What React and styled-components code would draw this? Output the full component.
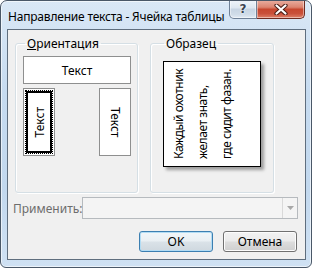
import React from 'react';
import styled, { createGlobalStyle } from 'styled-components';

const Global = createGlobalStyle`
  html, body { margin: 0; padding: 0; background: #ffffff; }
  body { font-family: "Noto Sans", "Open Sans", sans-serif; font-size: 12px; color: #000; }
  * { box-sizing: border-box; }
`;

const Window = styled.div`
  width: 312px;
  height: 268px;
  border: 1px solid #4a5868;
  border-radius: 7px 7px 6px 6px;
  background: linear-gradient(180deg, #dae8f6 0%, #c6dbf0 35%, #c2d8ee 70%, #cfe1f3 100%);
  box-shadow: inset 0 0 0 1px rgba(255, 255, 255, 0.6);
  display: flex;
  flex-direction: column;
  padding: 0 5px 7px 6px;
  overflow: hidden;
`;

const TitleBar = styled.div`
  height: 28px;
  display: flex;
  align-items: flex-start;
  flex-shrink: 0;
`;

const Title = styled.div`
  margin: 8px 0 0 1px;
  font-size: 12px;
  line-height: 15px;
  color: #000;
  white-space: nowrap;
  flex: 1;
  letter-spacing: -0.2px;
`;

const CaptionButton = styled.div`
  margin-top: -1px;
  height: 19px;
  width: ${p => p.$w}px;
  display: flex;
  align-items: center;
  justify-content: center;
  border: 1px solid ${p => (p.$close ? '#6e2b21' : '#6f8197')};
  border-top: none;
  border-radius: ${p => (p.$close ? '0 0 5px 0' : '0 0 0 5px')};
  border-left-width: ${p => (p.$close ? '0' : '1px')};
  background: ${p =>
    p.$close
      ? 'linear-gradient(180deg, #eab0a2 0%, #dc8470 40%, #c7472f 52%, #c9503a 75%, #dd8068 100%)'
      : 'linear-gradient(180deg, #f0f5fa 0%, #dfe8f1 42%, #c8d5e3 52%, #d0dce8 80%, #e2ebf4 100%)'};
  box-shadow: inset 0 0 0 1px rgba(255, 255, 255, 0.45);
`;

const CaptionGroup = styled.div`
  display: flex;
  margin-right: 1px;
`;

const HelpGlyph = styled.span`
  font-family: "DejaVu Sans", sans-serif;
  font-weight: bold;
  font-size: 12px;
  line-height: 12px;
  color: #3a4350;
  text-shadow: 0 0 2px #ffffff, 0 0 1px #ffffff;
`;

const Client = styled.div`
  flex: 1;
  border: 1px solid #5f6e7e;
  background: #f0f0f0;
  display: flex;
  flex-direction: column;
`;

const GroupsRow = styled.div`
  display: flex;
  gap: 12px;
  padding: 6px 0 0 7px;
`;

const Group = styled.fieldset`
  margin: 0;
  width: ${p => p.$w}px;
  height: 157px;
  border: 1px solid #d5dfe5;
  border-radius: 3px;
  box-shadow: inset 1px 1px 0 #ffffff, 1px 1px 0 #ffffff;
  padding: ${p => p.$pad};
  min-width: 0;
`;

const Legend = styled.legend`
  padding: 0 2px;
  margin-left: 2px;
  font-size: 12px;
  line-height: 15px;
  color: #000;
`;

const Accel = styled.span`
  text-decoration: underline;
  text-underline-offset: 1px;
`;

const OrientColumn = styled.div`
  display: flex;
  flex-direction: column;
  gap: 4px;
  margin-top: 5px;
`;

const OrientRow = styled.div`
  display: flex;
  justify-content: space-between;
`;

const OptionBox = styled.div`
  width: ${p => p.$w}px;
  height: ${p => p.$h}px;
  border: 1px solid #8e8f8f;
  background: #ffffff;
  display: flex;
  align-items: center;
  justify-content: center;
  padding: ${p => (p.$selected ? '1px' : '0')};
`;

const FocusRing = styled.div`
  width: 100%;
  height: 100%;
  border: 1px dotted #000;
`;

const SelectedFrame = styled.div`
  width: 100%;
  height: 100%;
  border: 2px solid #000;
  background: #fff;
  display: flex;
  align-items: center;
  justify-content: center;
`;

const Label = styled.span`
  font-size: 12px;
  line-height: 15px;
  white-space: nowrap;
  writing-mode: ${p => (p.$dir ? 'vertical-rl' : 'horizontal-tb')};
  transform: ${p => (p.$dir === 'up' ? 'rotate(180deg)' : 'none')};
`;

const Paper = styled.div`
  width: 98px;
  height: 106px;
  margin: 10px auto 0;
  border: 1px solid #000;
  background: #ffffff;
  box-shadow: 3px 3px 3px rgba(0, 0, 0, 0.35);
  overflow: hidden;
`;

const SampleText = styled.div`
  width: 100%;
  height: 100%;
  writing-mode: vertical-rl;
  transform: rotate(180deg);
  padding: 7px 3px 0 0;
  color: #000;
`;

const SampleLine = styled.div`
  font-size: 12px;
  line-height: 24px;
  letter-spacing: -0.45px;
  white-space: nowrap;
`;

const ApplyRow = styled.div`
  display: flex;
  align-items: center;
  margin-top: 4px;
  padding: 0 7px 0 5px;
`;

const ApplyLabel = styled.span`
  width: 69px;
  color: #6d6d6d;
  font-size: 12px;
  line-height: 15px;
`;

const Combo = styled.div`
  flex: 1;
  height: 22px;
  border: 1px solid #b6babe;
  background: #f4f4f4;
  display: flex;
  justify-content: flex-end;
`;

const ComboArrow = styled.div`
  width: 15px;
  border-left: 1px solid #d9d9d9;
  display: flex;
  align-items: center;
  justify-content: center;
`;

const ButtonRow = styled.div`
  display: flex;
  justify-content: flex-end;
  gap: 10px;
  margin-top: 12px;
  padding-right: 8px;
`;

const Button = styled.div`
  width: 74px;
  height: 21px;
  border-radius: 3px;
  border: 1px solid ${p => (p.$default ? '#3c7fb1' : '#707070')};
  background: ${p =>
    p.$default
      ? 'linear-gradient(180deg, #f1f6f9 0%, #e9eff3 48%, #dae2e8 52%, #cfd8df 100%)'
      : 'linear-gradient(180deg, #f2f2f2 0%, #ebebeb 48%, #dddddd 52%, #cfcfcf 100%)'};
  box-shadow: inset 0 0 0 1px ${p => (p.$default ? '#b2dcf4' : '#fcfcfc')};
  display: flex;
  align-items: center;
  justify-content: center;
  font-size: 12px;
  line-height: 15px;
  color: #000;
`;

export default function App() {
  return (
    <>
      <Global />
      <Window>
        <TitleBar>
          <Title>Направление текста - Ячейка таблицы</Title>
          <CaptionGroup>
            <CaptionButton $w={28}>
              <HelpGlyph>?</HelpGlyph>
            </CaptionButton>
            <CaptionButton $w={48} $close>
              <svg width="14" height="11" viewBox="0 0 14 11">
                <path d="M2.5 1.5 L11.5 9.5 M11.5 1.5 L2.5 9.5" stroke="#4a1d15" strokeWidth="4.2" strokeLinecap="round" />
                <path d="M2.5 1.5 L11.5 9.5 M11.5 1.5 L2.5 9.5" stroke="#ffffff" strokeWidth="2.2" strokeLinecap="round" />
              </svg>
            </CaptionButton>
          </CaptionGroup>
        </TitleBar>
        <Client>
          <GroupsRow>
            <Group $w={123} $pad="0 6px 0 7px">
              <Legend>
                <Accel>О</Accel>риентация
              </Legend>
              <OrientColumn>
                <OptionBox $w={108} $h={28}>
                  <Label>Текст</Label>
                </OptionBox>
                <OrientRow>
                  <OptionBox $w={32} $h={68} $selected>
                    <FocusRing>
                      <SelectedFrame>
                        <Label $dir="up">Текст</Label>
                      </SelectedFrame>
                    </FocusRing>
                  </OptionBox>
                  <OptionBox $w={32} $h={68}>
                    <Label $dir="down">Текст</Label>
                  </OptionBox>
                </OrientRow>
              </OrientColumn>
            </Group>
            <Group $w={124} $pad="0 11px 0 11px">
              <Legend>Образец</Legend>
              <Paper>
                <SampleText>
                  <SampleLine>Каждый охотник</SampleLine>
                  <SampleLine>желает знать,</SampleLine>
                  <SampleLine>где сидит фазан.</SampleLine>
                </SampleText>
              </Paper>
            </Group>
          </GroupsRow>
          <ApplyRow>
            <ApplyLabel>Применить:</ApplyLabel>
            <Combo>
              <ComboArrow>
                <svg width="7" height="4" viewBox="0 0 7 4">
                  <path d="M0 0 L7 0 L3.5 4 Z" fill="#a8a8a8" />
                </svg>
              </ComboArrow>
            </Combo>
          </ApplyRow>
          <ButtonRow>
            <Button $default>OK</Button>
            <Button>Отмена</Button>
          </ButtonRow>
        </Client>
      </Window>
    </>
  );
}
